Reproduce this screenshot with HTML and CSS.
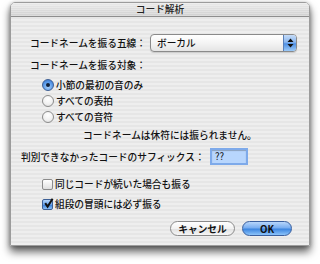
FILE: index.html
```html
<!DOCTYPE html>
<html lang="ja">
<head>
<meta charset="utf-8">
<link rel="stylesheet" href="styles.css">
</head>
<body>
<div class="win">
  <div class="titlebar">コード解析</div>
  <div class="content">
    <div class="staff-row">
      <span class="lbl">コードネームを振る五線：</span>
      <div class="popup">
        <span class="popup-text">ボーカル</span>
        <span class="popup-btn">
          <svg width="7" height="10" viewBox="0 0 7 10"><path d="M3.5 0.5 L6.5 4 L0.5 4 Z M0.5 6 L6.5 6 L3.5 9.5 Z" fill="#111"/></svg>
        </span>
      </div>
    </div>
    <div class="target">コードネームを振る対象：</div>
    <div class="radio-row first"><span class="radio on"><span class="dot"></span></span>小節の最初の音のみ</div>
    <div class="radio-row"><span class="radio"></span>すべての表拍</div>
    <div class="radio-row"><span class="radio"></span>すべての音符</div>
    <div class="note">コードネームは休符には振られません。</div>
    <div class="suffix-row"><span class="lbl">判別できなかったコードのサフィックス：</span><span class="field">??</span></div>
    <div class="check-row first"><span class="check"></span>同じコードが続いた場合も振る</div>
    <div class="check-row"><span class="check on"><svg width="11" height="11" viewBox="0 0 11 11"><path d="M2.2 5.2 L4.6 8.6 L9.6 0.8" fill="none" stroke="#111" stroke-width="2"/></svg></span>組段の冒頭には必ず振る</div>
    <div class="buttons">
      <span class="btn cancel">キャンセル</span>
      <span class="btn ok">OK</span>
    </div>
  </div>
</div>
</body>
</html>
```
FILE: styles.css
```css
* { box-sizing: border-box; }
html, body { margin: 0; padding: 0; }
body {
  width: 320px;
  height: 264px;
  background: #ffffff;
  font-family: "Noto Sans CJK JP", "Noto Sans", sans-serif;
  font-size: 9.7px;
  font-weight: 500;
  color: #111;
  overflow: hidden;
}
.win {
  margin: 2px 0 0 10px;
  width: 300px;
  height: 244px;
  border: 1px solid #9c9c9c;
  border-radius: 5px 5px 0 0;
  background: repeating-linear-gradient(to bottom, #eeeeee 0, #eeeeee 2px, #e6e6e6 2px, #e6e6e6 4px);
  box-shadow: 0 6px 9px rgba(0,0,0,0.6), 0 1px 4px rgba(0,0,0,0.3);
  display: flex;
  flex-direction: column;
}
.titlebar {
  height: 14px;
  border-bottom: 1px solid #8e8e8e;
  border-radius: 4px 4px 0 0;
  background: repeating-linear-gradient(to bottom, rgba(255,255,255,0.25) 0, rgba(255,255,255,0.25) 1px, rgba(0,0,0,0) 1px, rgba(0,0,0,0) 2px), linear-gradient(to bottom, #eaeaea, #d0d0d0);
  text-align: center;
  line-height: 13px;
  font-size: 9.7px;
  color: #222;
}
.content {
  display: flex;
  flex-direction: column;
  padding-top: 17px;
}
.staff-row {
  display: flex;
  align-items: center;
  height: 18px;
  margin-left: 19px;
}
.staff-row .lbl { width: 120px; }
.popup {
  width: 147px;
  height: 18px;
  border: 1px solid #8a8a8a;
  border-radius: 4px;
  background: linear-gradient(to bottom, #ffffff 0%, #f4f4f4 50%, #e4e4e4 100%);
  display: flex;
  align-items: center;
  justify-content: space-between;
  box-shadow: 0 1px 1px rgba(0,0,0,0.15);
  overflow: hidden;
}
.popup-text { padding-left: 6px; line-height: 16px; }
.popup-btn {
  width: 13px;
  height: 16px;
  border-left: 1px solid #5a7fb8;
  background: linear-gradient(to bottom, #c6dcf8 0%, #8ab6ee 45%, #4f90e4 55%, #9ccaf8 100%);
  display: flex;
  align-items: center;
  justify-content: center;
}
.target {
  margin: 6px 0 0 19px;
  height: 14px;
  line-height: 14px;
}
.radio-row, .check-row {
  display: flex;
  align-items: center;
  margin-left: 31px;
  height: 16px;
  gap: 2px;
}
.radio-row.first { margin-top: 5px; }
.radio {
  width: 12px;
  height: 12px;
  border-radius: 50%;
  border: 1px solid #8c8c8c;
  background: radial-gradient(circle at 50% 30%, #ffffff 0%, #f0f0f0 60%, #d4d4d4 100%);
  display: flex;
  align-items: center;
  justify-content: center;
}
.radio.on {
  border-color: #3d5f95;
  background: radial-gradient(circle at 50% 70%, #a8d0fb 0%, #5a9ae8 55%, #2f6fcc 100%);
}
.dot {
  width: 4px;
  height: 4px;
  border-radius: 50%;
  background: #10213a;
}
.note {
  margin: 3px 0 0 72px;
  height: 14px;
  line-height: 14px;
}
.suffix-row {
  display: flex;
  align-items: center;
  margin: 6px 0 0 10px;
  height: 17px;
}
.suffix-row .lbl { width: 189px; }
.field {
  width: 38px;
  height: 17px;
  border: 2px solid #7eaaea;
  background: #b8d6fd;
  padding-left: 3px;
  line-height: 13px;
  font-weight: 400;
  box-shadow: inset 0 1px 1px rgba(0,0,0,0.25);
}
.check-row.first { margin-top: 11px; }
.check-row + .check-row { margin-top: 4px; }
.check {
  width: 11px;
  height: 11px;
  border: 1px solid #8c8c8c;
  border-radius: 2px;
  background: linear-gradient(to bottom, #ffffff, #dedede);
  position: relative;
}
.check.on {
  border-color: #3d5f95;
  background: linear-gradient(to bottom, #b3d4fb 0%, #6aa4ec 50%, #3a7fd8 55%, #8cc0f6 100%);
}
.check svg { position: absolute; left: 0; top: -2px; }
.buttons {
  display: flex;
  justify-content: flex-end;
  gap: 7px;
  margin: 9px 17px 0 0;
  height: 15px;
}
.btn {
  height: 15px;
  border-radius: 8px;
  display: flex;
  align-items: center;
  justify-content: center;
  font-weight: 700;
}
.cancel {
  width: 65px;
  border: 1px solid #8a8a8a;
  background: linear-gradient(to bottom, #ffffff 0%, #f2f2f2 50%, #e2e2e2 55%, #f6f6f6 100%);
}
.ok {
  width: 50px;
  border: 1px solid #3a5f9e;
  background: linear-gradient(to bottom, #b8d6fb 0%, #78adf0 45%, #3d86e0 55%, #8cc4fa 100%);
}
```
